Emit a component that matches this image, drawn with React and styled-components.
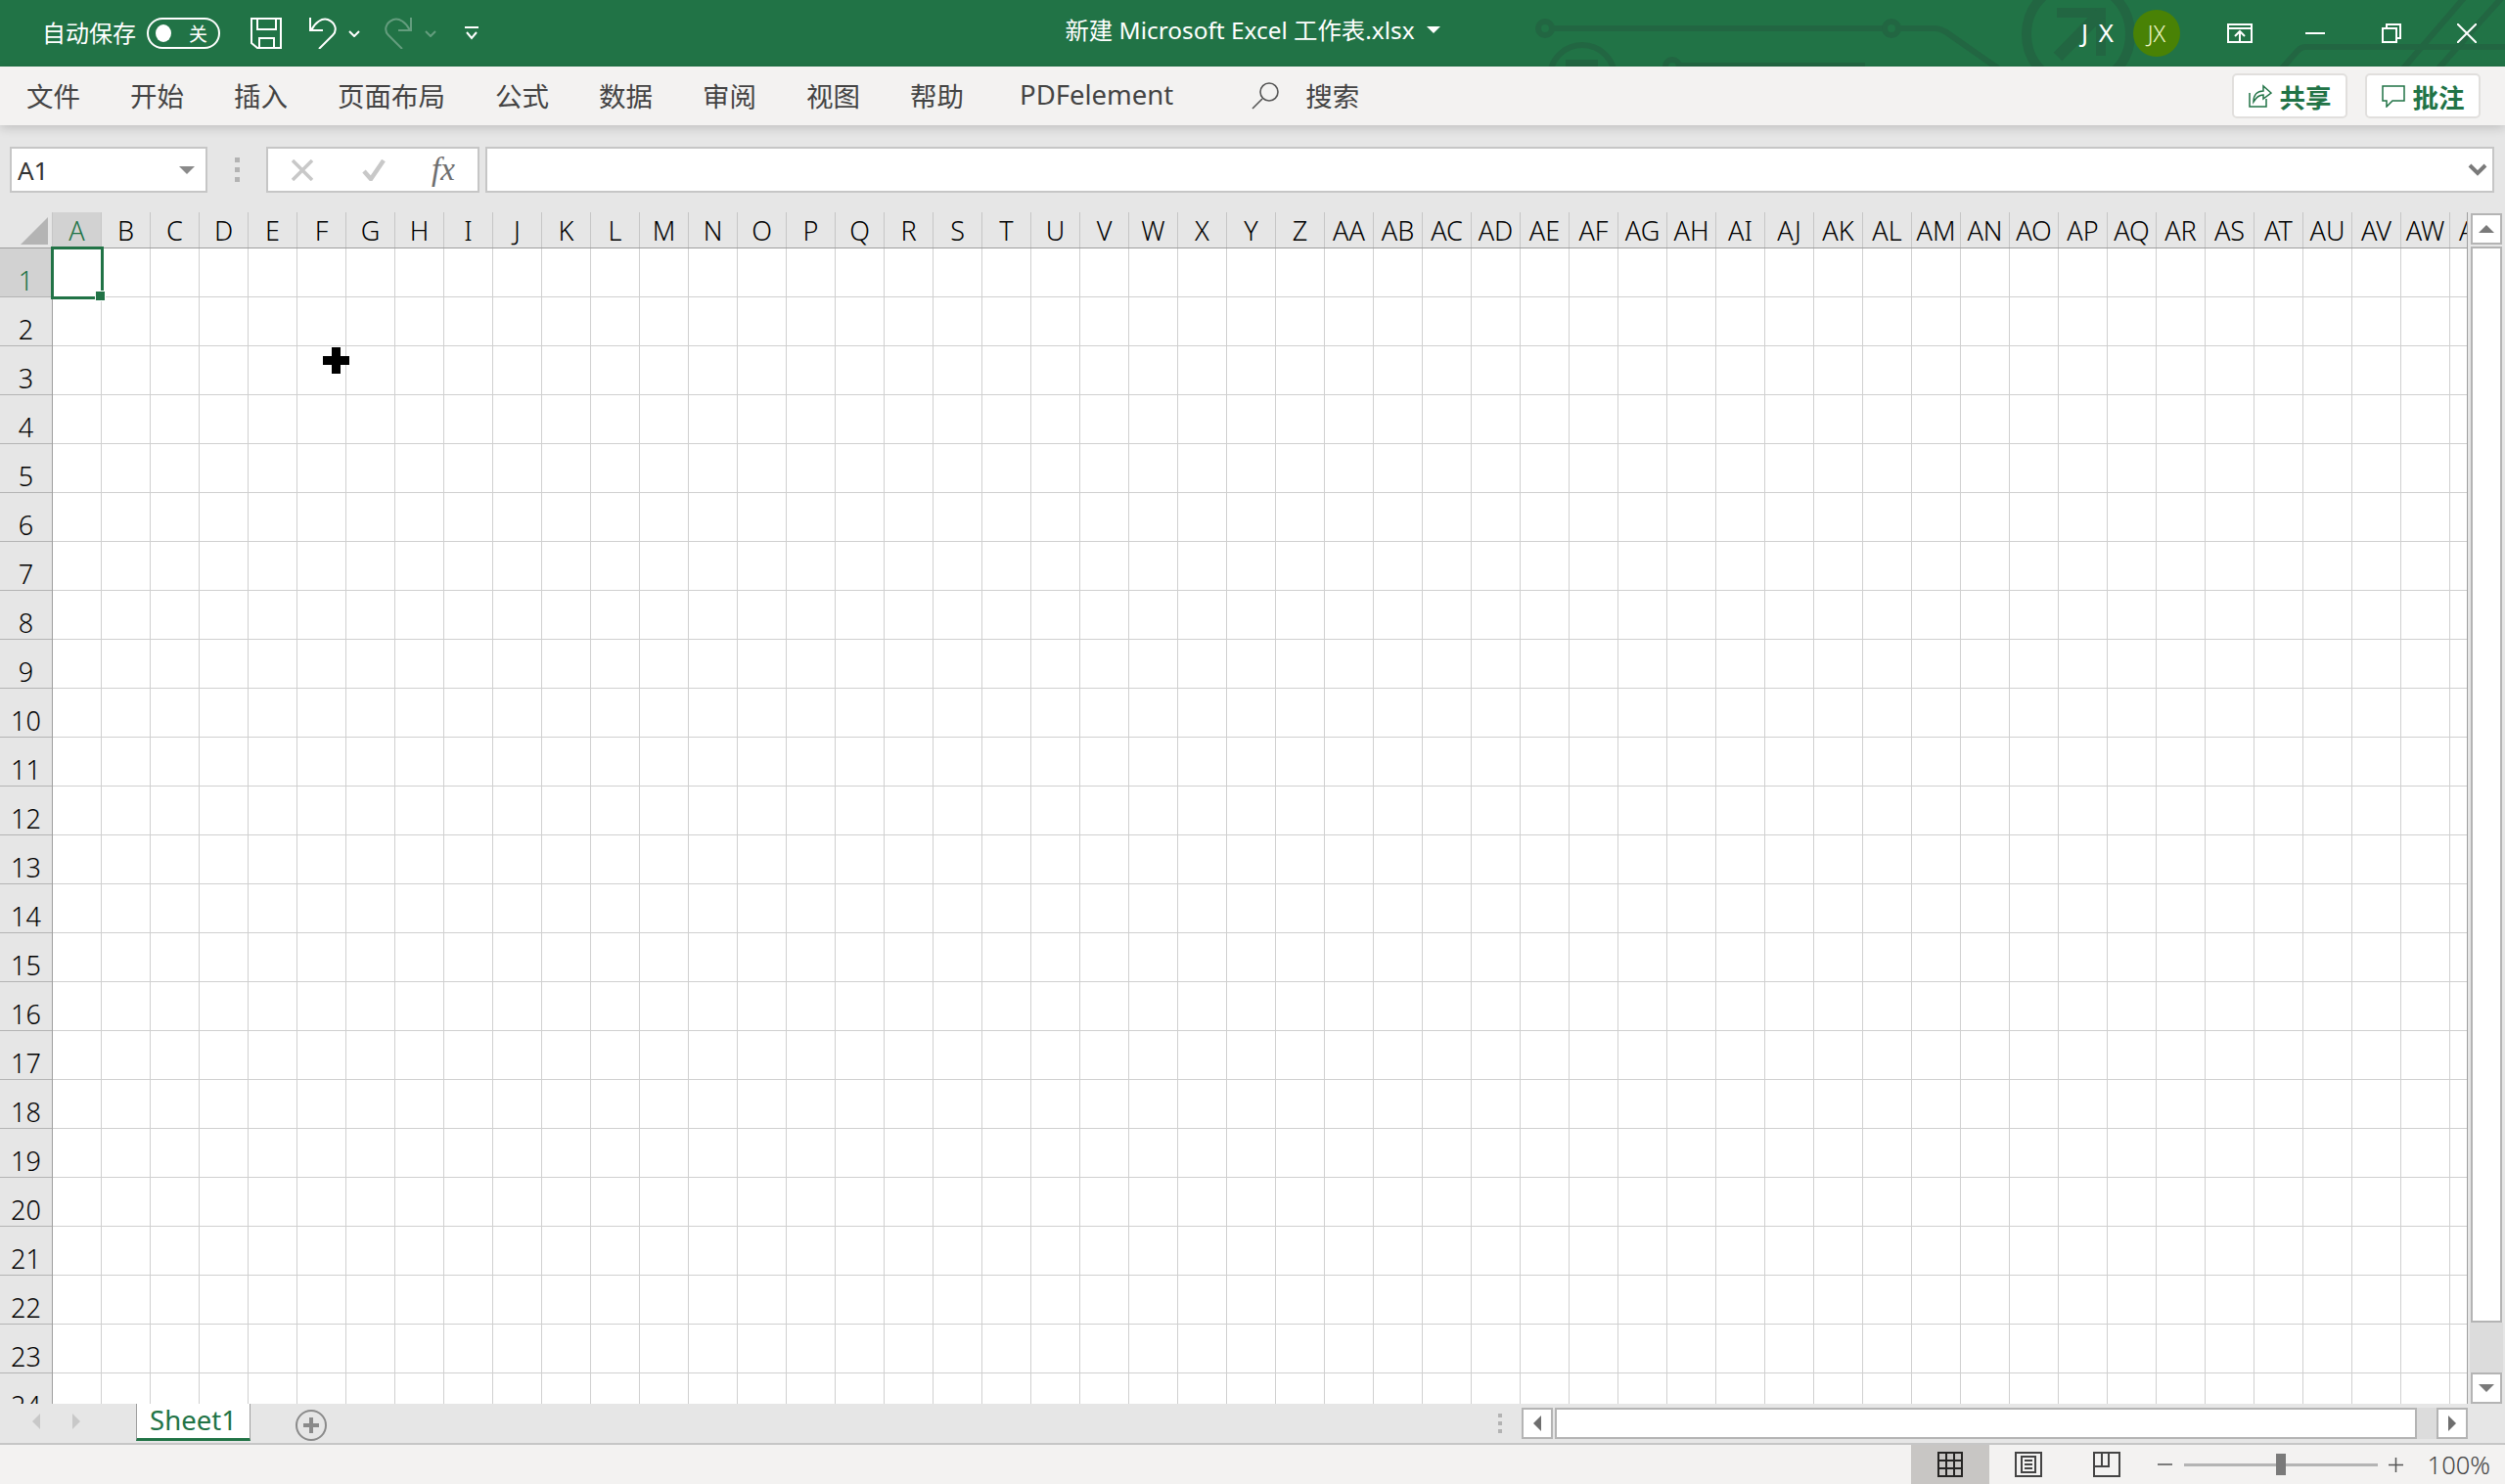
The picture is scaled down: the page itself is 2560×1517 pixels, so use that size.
import styled, { createGlobalStyle } from 'styled-components';

const GlobalStyle = createGlobalStyle`
  html, body {
    margin: 0;
    padding: 0;
    background: #e6e6e6;
  }
  * {
    box-sizing: border-box;
  }
`;

const FONT = `"Noto Sans", "Noto Sans CJK SC", sans-serif`;
const GREEN = '#217346';

const columnName = (i) =>
  i < 26 ? String.fromCharCode(65 + i) : 'A' + String.fromCharCode(65 + i - 26);
const COLUMNS = Array.from({ length: 50 }, (_, i) => columnName(i));
const ROWS = Array.from({ length: 24 }, (_, i) => i + 1);
const TABS = ['文件', '开始', '插入', '页面布局', '公式', '数据', '审阅', '视图', '帮助'];

const Window = styled.div`
  width: 2560px;
  height: 1517px;
  display: flex;
  flex-direction: column;
  overflow: hidden;
  background: #e6e6e6;
  font-family: ${FONT};
`;

/* title bar */
const TitleBar = styled.div`
  position: relative;
  height: 68px;
  flex: none;
  display: grid;
  grid-template-columns: 1fr auto 1fr;
  align-items: center;
  background: ${GREEN};
  color: #fff;
`;

const Circuit = styled.svg`
  position: absolute;
  inset: 0;
`;

const QuickAccess = styled.div`
  position: relative;
  display: flex;
  align-items: center;
  padding-left: 43px;
`;

const AutoSave = styled.span`
  font-size: 24px;
  margin: -3px 11px 0 0;
`;

const Toggle = styled.div`
  width: 75px;
  height: 32px;
  border: 2px solid #fff;
  border-radius: 16px;
  display: flex;
  align-items: center;
  justify-content: space-between;
  padding: 0 11px 0 7px;
  font-size: 19px;
  margin-right: 31px;
`;

const ToggleDot = styled.i`
  width: 16px;
  height: 18px;
  border-radius: 50%;
  background: #fff;
`;

const QuickIcon = styled.svg`
  display: block;
  margin-left: ${(p) => p.$gap || 0}px;
  opacity: ${(p) => (p.$dim ? 0.3 : 1)};
`;

const DocTitle = styled.div`
  position: relative;
  display: flex;
  align-items: center;
  font-size: 24.4px;
  margin-top: -10px;
  white-space: nowrap;
`;

const Caret = styled.i`
  width: 0;
  height: 0;
  margin: 2px 0 0 12px;
  border-left: 7px solid transparent;
  border-right: 7px solid transparent;
  border-top: 7px solid #fff;
`;

const AccountArea = styled.div`
  position: relative;
  display: flex;
  align-items: center;
  justify-content: flex-end;
`;

const UserName = styled.span`
  font-size: 26px;
  letter-spacing: 2px;
  margin: -2px 18px 0 0;
`;

const Avatar = styled.div`
  width: 48px;
  height: 48px;
  border-radius: 50%;
  background: #498205;
  color: #f0f7c8;
  font-size: 23px;
  font-weight: 300;
  display: flex;
  align-items: center;
  justify-content: center;
  margin-right: 22px;
`;

const WinButton = styled.div`
  width: 77.5px;
  height: 68px;
  display: flex;
  align-items: center;
  justify-content: center;
`;

/* ribbon tabs */
const Ribbon = styled.div`
  position: relative;
  z-index: 2;
  height: 60px;
  flex: none;
  display: flex;
  align-items: center;
  padding: 0 25px 0 27px;
  gap: 51px;
  background: #f3f2f1;
  color: #444;
  font-size: 27.5px;
  box-shadow: 0 3px 10px rgba(0, 0, 0, 0.16);
`;

const RibbonTab = styled.span`
  white-space: nowrap;
  margin: -3px 0 0 ${(p) => p.$offset || 0}px;
`;

const SearchBox = styled.div`
  display: flex;
  align-items: center;
  gap: 27px;
  margin-left: 29px;
`;

const RibbonActions = styled.div`
  margin-left: auto;
  display: flex;
  gap: 18px;
`;

const ActionButton = styled.div`
  width: 118px;
  height: 46px;
  display: flex;
  align-items: center;
  justify-content: center;
  gap: 8px;
  background: #fff;
  border: 2px solid #e1dfdd;
  border-radius: 5px;
  color: ${GREEN};
  font-size: 26.5px;
  font-weight: 700;
`;

/* formula bar */
const FormulaBar = styled.div`
  height: 89px;
  flex: none;
  display: flex;
  gap: 6px;
  padding: 22px 11px 20px 10px;
  background: #e6e6e6;
`;

const FieldBox = styled.div`
  height: 47px;
  background: #fff;
  border: 2px solid #c6c6c6;
  display: flex;
  align-items: center;
`;

const NameBox = styled(FieldBox)`
  width: 202px;
  justify-content: space-between;
  padding: 0 11px 0 6px;
  font-size: 26px;
  color: #333;
  margin-right: 22px;
`;

const DownTriangle = styled.i`
  width: 0;
  height: 0;
  border-left: 8px solid transparent;
  border-right: 8px solid transparent;
  border-top: 8px solid #8a8a8a;
`;

const Grip = styled.div`
  width: 5px;
  display: flex;
  flex-direction: column;
  justify-content: center;
  gap: 5px;
  margin-right: 21px;
  i {
    width: 5px;
    height: 5px;
    background: #b3b3b3;
  }
`;

const FxBox = styled(FieldBox)`
  width: 218px;
  padding-left: 24px;
`;

const Fx = styled.span`
  font-family: 'Liberation Serif', serif;
  font-style: italic;
  font-size: 33px;
  color: #6e6e6e;
  margin-left: 47px;
`;

const FormulaInput = styled(FieldBox)`
  flex: 1;
  justify-content: flex-end;
  padding-right: 5px;
`;

/* sheet */
const SheetArea = styled.div`
  height: 1218px;
  flex: none;
  display: flex;
`;

const Pane = styled.div`
  width: 2522px;
  height: 100%;
  flex: none;
  display: flex;
  flex-direction: column;
  overflow: hidden;
  border-right: 1.5px solid #9e9e9e;
`;

const HeaderRow = styled.div`
  height: 37px;
  flex: none;
  display: flex;
  border-bottom: 1.5px solid #9e9e9e;
`;

const Corner = styled.div`
  width: 54px;
  flex: none;
  display: flex;
  align-items: flex-end;
  justify-content: flex-end;
  padding: 0 4px 3px 0;
  border-right: 1px solid #c6c6c6;
`;

const ColumnHead = styled.div`
  width: 50px;
  flex: none;
  text-align: center;
  font-size: 27px;
  font-weight: 300;
  line-height: 38px;
  white-space: nowrap;
  border-right: 1px solid #c6c6c6;
  background: ${(p) => (p.$active ? '#d2d2d2' : 'transparent')};
  color: ${(p) => (p.$active ? GREEN : '#000')};
`;

const BodyRow = styled.div`
  flex: 1;
  display: flex;
  min-height: 0;
`;

const RowHeads = styled.div`
  width: 54px;
  flex: none;
  border-right: 1.5px solid #9e9e9e;
`;

const RowHead = styled.div`
  height: 50px;
  display: flex;
  align-items: center;
  justify-content: center;
  padding-top: 16px;
  font-size: 27px;
  font-weight: 300;
  border-bottom: 1px solid #b4b4b4;
  background: ${(p) => (p.$active ? '#d2d2d2' : 'transparent')};
  color: ${(p) => (p.$active ? GREEN : '#000')};
`;

const Cells = styled.div`
  position: relative;
  flex: 1;
  background-color: #fff;
  background-image:
    linear-gradient(to right, #d0d0d0 1px, transparent 1px),
    linear-gradient(to bottom, #d0d0d0 1px, transparent 1px);
  background-size: 50px 50px;
  background-position: 49px 49px;
`;

const Selection = styled.div`
  position: absolute;
  left: -2px;
  top: -2px;
  width: 54px;
  height: 54px;
  border: 3px solid ${GREEN};
`;

const FillHandle = styled.i`
  position: absolute;
  right: -4px;
  bottom: -4px;
  width: 9px;
  height: 9px;
  background: ${GREEN};
  outline: 1px solid #fff;
`;

const CellCursor = styled.svg`
  position: absolute;
  left: 276px;
  top: 101px;
`;

const VScroll = styled.div`
  flex: 1;
  display: flex;
  flex-direction: column;
  padding: 1px 3px 0 3px;
`;

const ScrollButton = styled.div`
  width: 32px;
  height: 32px;
  flex: none;
  display: flex;
  align-items: center;
  justify-content: center;
  background: #fff;
  border: 2.5px solid #b4b4b4;
`;

const VThumb = styled.div`
  height: 1100px;
  flex: none;
  margin-top: 2px;
  background: #fff;
  border: 2.5px solid #b4b4b4;
`;

const VTrack = styled.div`
  flex: 1;
  margin: 0 -1px;
  background: #dcdcdc;
`;

const Arrow = styled.i`
  width: 0;
  height: 0;
  ${(p) => {
    const side = `${p.$size}px solid transparent`;
    const solid = `${p.$size}px solid ${p.$color}`;
    if (p.$dir === 'up') return `border-left: ${side}; border-right: ${side}; border-bottom: ${solid};`;
    if (p.$dir === 'down') return `border-left: ${side}; border-right: ${side}; border-top: ${solid};`;
    if (p.$dir === 'left') return `border-top: ${side}; border-bottom: ${side}; border-right: ${solid};`;
    return `border-top: ${side}; border-bottom: ${side}; border-left: ${solid};`;
  }}
`;

/* sheet tabs and horizontal scrollbar */
const TabStrip = styled.div`
  height: 42px;
  flex: none;
  display: flex;
  background: #e6e6e6;
  border-bottom: 2px solid #c6c6c6;
`;

const TabNav = styled.div`
  width: 139px;
  flex: none;
  display: flex;
  align-items: center;
  gap: 33px;
  padding-left: 33px;
  padding-bottom: 4px;
`;

const SheetTab = styled.div`
  width: 117px;
  height: 38px;
  flex: none;
  background: #fff;
  border-left: 1px solid #9e9e9e;
  border-right: 1px solid #9e9e9e;
  border-bottom: 3px solid ${GREEN};
  color: ${GREEN};
  font-size: 27.5px;
  line-height: 33px;
  text-align: center;
`;

const AddSheet = styled.div`
  width: 32px;
  height: 32px;
  flex: none;
  margin: 6px 0 0 46px;
  border: 2px solid #8a8a8a;
  border-radius: 50%;
  display: flex;
  align-items: center;
  justify-content: center;
`;

const HScroll = styled.div`
  margin-left: auto;
  width: 991px;
  display: flex;
  align-items: flex-start;
  padding-top: 4px;
  margin-right: 38px;
`;

const HGrip = styled(Grip)`
  width: 4px;
  height: 32px;
  gap: 4px;
  margin-right: 20px;
  i {
    width: 4px;
    height: 4px;
  }
`;

const HThumb = styled.div`
  flex: 1;
  height: 32px;
  margin-left: 2px;
  background: #fff;
  border: 2.5px solid #b4b4b4;
`;

const HTrack = styled.div`
  width: 20px;
  height: 32px;
  background: #dcdcdc;
`;

/* status bar */
const StatusBar = styled.div`
  flex: 1;
  display: flex;
  align-items: stretch;
  justify-content: flex-end;
  background: #f3f2f1;
  color: #444;
  padding-right: 15px;
`;

const ViewButton = styled.div`
  width: 80px;
  display: flex;
  align-items: center;
  justify-content: center;
  background: ${(p) => (p.$active ? '#c8c6c4' : 'transparent')};
`;

const ZoomControl = styled.div`
  display: flex;
  align-items: center;
  margin-left: 12px;
`;

const SliderTrack = styled.div`
  position: relative;
  width: 198px;
  height: 3px;
  margin: 0 11px 0 12px;
  background: #b4b4b4;
`;

const SliderThumb = styled.i`
  position: absolute;
  left: 94px;
  top: -10px;
  width: 10px;
  height: 22px;
  background: #7a7a7a;
`;

const ZoomValue = styled.span`
  margin-left: 25px;
  font-size: 25.5px;
  font-weight: 300;
  color: #444;
`;

const App = () => {
  return (
    <>
      <GlobalStyle />
      <Window>
        <TitleBar>
          <Circuit width="2560" height="68" viewBox="0 0 2560 68" fill="none" stroke="#226642" strokeWidth="6">
            <circle cx="1579" cy="29" r="7" />
            <path d="M1586 29H1926" />
            <circle cx="1933" cy="29" r="7" />
            <path d="M1940 29H1977C1983 29 1988 32 1992 35L2042 70" />
            <circle cx="1617" cy="79" r="33" />
            <path d="M1600 65H1633" strokeWidth="8" />
            <circle cx="1709" cy="68" r="7" />
            <path d="M1716 67H1906" />
            <circle cx="2124" cy="35" r="53" strokeWidth="10" />
            <path d="M2102 13H2147V57" strokeWidth="10" />
            <path d="M2146 14L2103 58" strokeWidth="12" />
            <path d="M2332 70L2347 53C2350 50 2352 48 2356 48H2560" />
            <path d="M2456 70L2518 -2" />
            <path d="M2492 70L2560 -6" />
          </Circuit>
          <QuickAccess>
            <AutoSave>自动保存</AutoSave>
            <Toggle>
              <ToggleDot />
              <span>关</span>
            </Toggle>
            <QuickIcon width="32" height="32" viewBox="0 0 32 32" fill="none" stroke="#fff" strokeWidth="2">
              <path d="M1 1H31V31H7L1 26Z" />
              <path d="M7 1V12H26V1" />
              <path d="M9 31V21H24V31" />
            </QuickIcon>
            <QuickIcon $gap={28} width="28" height="32" viewBox="0 0 28 32" fill="none" stroke="#fff" strokeWidth="2">
              <path d="M1 0V13H14" />
              <path d="M2 13C6 5 13 0 19 2C27 5 29 13 24 18L10 32" />
            </QuickIcon>
            <QuickIcon $gap={12} width="12" height="7" viewBox="0 0 12 7" fill="none" stroke="#fff" strokeWidth="2">
              <path d="M1 1L6 6L11 1" />
            </QuickIcon>
            <QuickIcon $dim $gap={25} width="28" height="32" viewBox="0 0 28 32" fill="none" stroke="#fff" strokeWidth="2">
              <path d="M27 0V13H14" />
              <path d="M26 13C22 5 15 0 9 2C1 5 -1 13 4 18L18 32" />
            </QuickIcon>
            <QuickIcon $dim $gap={13} width="12" height="7" viewBox="0 0 12 7" fill="none" stroke="#fff" strokeWidth="2">
              <path d="M1 1L6 6L11 1" />
            </QuickIcon>
            <QuickIcon $gap={29} width="14" height="14" viewBox="0 0 14 14" fill="none" stroke="#fff" strokeWidth="2">
              <path d="M0 1H14" />
              <path d="M2 6L7 12L12 6" />
            </QuickIcon>
          </QuickAccess>
          <DocTitle>
            新建 Microsoft Excel 工作表.xlsx
            <Caret />
          </DocTitle>
          <AccountArea>
            <UserName>J X</UserName>
            <Avatar>JX</Avatar>
            <WinButton>
              <svg width="26" height="20" viewBox="0 0 26 20" fill="none" stroke="#fff" strokeWidth="2">
                <path d="M1 1H25V19H1Z" />
                <path d="M1 5H25" />
                <path d="M13 19V9M8 13L13 8L18 13" />
              </svg>
            </WinButton>
            <WinButton>
              <svg width="20" height="2" viewBox="0 0 20 2">
                <path d="M0 1H20" stroke="#fff" strokeWidth="2" />
              </svg>
            </WinButton>
            <WinButton>
              <svg width="20" height="20" viewBox="0 0 20 20" fill="none" stroke="#fff" strokeWidth="2">
                <path d="M1 5H15V19H1Z" />
                <path d="M5 5V1H19V15H15" />
              </svg>
            </WinButton>
            <WinButton>
              <svg width="20" height="20" viewBox="0 0 20 20" fill="none" stroke="#fff" strokeWidth="2">
                <path d="M0 0L20 20M20 0L0 20" />
              </svg>
            </WinButton>
          </AccountArea>
        </TitleBar>

        <Ribbon>
          {TABS.map((tab) => (
            <RibbonTab key={tab}>{tab}</RibbonTab>
          ))}
          <RibbonTab $offset={6}>PDFelement</RibbonTab>
          <SearchBox>
            <svg width="28" height="28" viewBox="0 0 28 28" fill="none" stroke="#555" strokeWidth="1.6">
              <circle cx="18" cy="10" r="9" />
              <path d="M11 17L1 27" />
            </svg>
            <RibbonTab>搜索</RibbonTab>
          </SearchBox>
          <RibbonActions>
            <ActionButton>
              <svg width="24" height="24" viewBox="0 0 24 24" fill="none" stroke={GREEN} strokeWidth="1.5">
                <path d="M1 9V23H18V15" />
                <path d="M5 18C5 11 9 7 15 7V2L23 9L15 15V11C11 11 8 13 5 18Z" />
              </svg>
              <span>共享</span>
            </ActionButton>
            <ActionButton>
              <svg width="24" height="23" viewBox="0 0 24 23" fill="none" stroke={GREEN} strokeWidth="1.5">
                <path d="M1 1H23V16H11L5 22V16H1Z" />
              </svg>
              <span>批注</span>
            </ActionButton>
          </RibbonActions>
        </Ribbon>

        <FormulaBar>
          <NameBox>
            <span>A1</span>
            <DownTriangle />
          </NameBox>
          <Grip>
            <i />
            <i />
            <i />
          </Grip>
          <FxBox>
            <svg width="22" height="22" viewBox="0 0 22 22" fill="none" stroke="#c8c8c8" strokeWidth="3.5">
              <path d="M1 1L21 21M21 1L1 21" />
            </svg>
            <svg width="24" height="22" viewBox="0 0 24 22" fill="none" stroke="#c8c8c8" strokeWidth="4.5" style={{ marginLeft: 50 }}>
              <path d="M2 12L9 20L22 1" />
            </svg>
            <Fx>fx</Fx>
          </FxBox>
          <FormulaInput>
            <svg width="20" height="13" viewBox="0 0 20 13" fill="none" stroke="#7a7a7a" strokeWidth="4">
              <path d="M2 2L10 10L18 2" />
            </svg>
          </FormulaInput>
        </FormulaBar>

        <SheetArea>
          <Pane>
            <HeaderRow>
              <Corner>
                <svg width="28" height="28" viewBox="0 0 28 28">
                  <path d="M28 0V28H0Z" fill="#b4b4b4" />
                </svg>
              </Corner>
              {COLUMNS.map((col, i) => (
                <ColumnHead key={col} $active={i === 0}>
                  {col}
                </ColumnHead>
              ))}
            </HeaderRow>
            <BodyRow>
              <RowHeads>
                {ROWS.map((row) => (
                  <RowHead key={row} $active={row === 1}>
                    {row}
                  </RowHead>
                ))}
              </RowHeads>
              <Cells>
                <Selection>
                  <FillHandle />
                </Selection>
                <CellCursor width="27" height="27" viewBox="0 0 27 27">
                  <path d="M9 0H18V9H27V18H18V27H9V18H0V9H9Z" fill="#000" />
                </CellCursor>
              </Cells>
            </BodyRow>
          </Pane>
          <VScroll>
            <ScrollButton>
              <Arrow $dir="up" $size={8} $color="#7a7a7a" />
            </ScrollButton>
            <VThumb />
            <VTrack />
            <ScrollButton>
              <Arrow $dir="down" $size={8} $color="#7a7a7a" />
            </ScrollButton>
          </VScroll>
        </SheetArea>

        <TabStrip>
          <TabNav>
            <Arrow $dir="left" $size={8} $color="#c8c8c8" />
            <Arrow $dir="right" $size={8} $color="#c8c8c8" />
          </TabNav>
          <SheetTab>Sheet1</SheetTab>
          <AddSheet>
            <svg width="18" height="18" viewBox="0 0 18 18">
              <path d="M7 1H11V7H17V11H11V17H7V11H1V7H7Z" fill="#8a8a8a" />
            </svg>
          </AddSheet>
          <HScroll>
            <HGrip>
              <i />
              <i />
              <i />
            </HGrip>
            <ScrollButton>
              <Arrow $dir="left" $size={8} $color="#6e6e6e" />
            </ScrollButton>
            <HThumb />
            <HTrack />
            <ScrollButton>
              <Arrow $dir="right" $size={8} $color="#6e6e6e" />
            </ScrollButton>
          </HScroll>
        </TabStrip>

        <StatusBar>
          <ViewButton $active>
            <svg width="26" height="26" viewBox="0 0 26 26" fill="none" stroke="#252423" strokeWidth="2">
              <path d="M1 1H25V25H1ZM1 9H25M1 17H25M9 1V25M17 1V25" />
            </svg>
          </ViewButton>
          <ViewButton>
            <svg width="28" height="26" viewBox="0 0 28 26" fill="none" stroke="#444" strokeWidth="2">
              <path d="M1 1H27V25H1Z" />
              <path d="M7 5H21V21H7Z" />
              <path d="M10 9H18M10 13H18M10 17H18" />
            </svg>
          </ViewButton>
          <ViewButton>
            <svg width="28" height="26" viewBox="0 0 28 26" fill="none" stroke="#444" strokeWidth="2">
              <path d="M1 1H27V25H1Z" />
              <path d="M1 15H16V1M9 1V15" />
            </svg>
          </ViewButton>
          <ZoomControl>
            <svg width="15" height="2" viewBox="0 0 15 2">
              <path d="M0 1H15" stroke="#555" strokeWidth="1.5" />
            </svg>
            <SliderTrack>
              <SliderThumb />
            </SliderTrack>
            <svg width="15" height="15" viewBox="0 0 15 15">
              <path d="M0 7.5H15M7.5 0V15" stroke="#555" strokeWidth="1.5" />
            </svg>
            <ZoomValue>100%</ZoomValue>
          </ZoomControl>
        </StatusBar>
      </Window>
    </>
  );
};

export default App;
